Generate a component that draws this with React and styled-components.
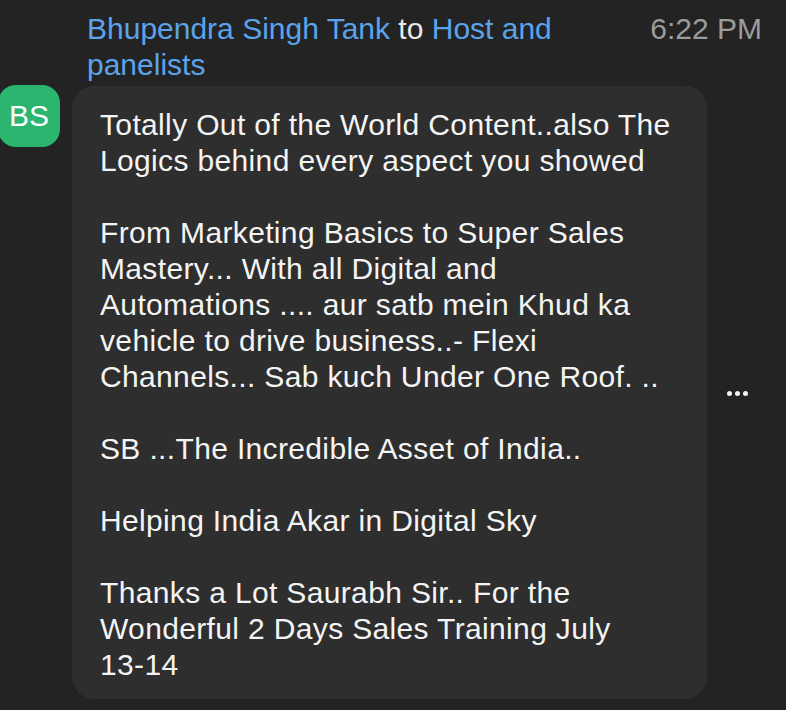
import styled, { createGlobalStyle } from "styled-components";

const Global = createGlobalStyle`
  html, body {
    margin: 0;
    padding: 0;
    background: #232323;
  }
  body {
    font-family: "Liberation Sans", Arial, sans-serif;
    -webkit-font-smoothing: antialiased;
  }
`;

const Page = styled.div`
  width: 786px;
  height: 710px;
  overflow: hidden;
  background: #232323;
`;

const Message = styled.div`
  display: grid;
  grid-template-columns: 72px 635px 1fr;
  grid-template-rows: auto auto;
  padding-top: 11px;
`;

const Header = styled.div`
  grid-column: 2 / 4;
  display: flex;
  justify-content: space-between;
  align-items: flex-start;
  padding-left: 15px;
  padding-right: 24px;
`;

const Meta = styled.div`
  width: 500px;
  font-size: 30px;
  line-height: 36px;
  color: #e8e8e8;
`;

const Name = styled.span`
  color: #5ba3ea;
`;

const Time = styled.div`
  font-size: 30px;
  line-height: 36px;
  color: #9c9c9c;
`;

const Avatar = styled.div`
  grid-column: 1;
  width: 62px;
  height: 62px;
  margin-left: -2px;
  margin-top: 2px;
  border-radius: 18px;
  background: #2bb56e;
  color: #fff;
  font-size: 30px;
  display: flex;
  align-items: center;
  justify-content: center;
`;

const Bubble = styled.div`
  grid-column: 2;
  margin-top: 3px;
  background: #2e2e2e;
  border-radius: 22px;
  padding: 21px 35px 16px 28px;
  font-size: 30px;
  line-height: 36px;
  letter-spacing: 0.35px;
  color: #f4f4f4;
`;

const Para = styled.p`
  margin: 0 0 36px;
  &:last-child {
    margin-bottom: 0;
  }
`;

const NoWrap = styled.span`
  white-space: nowrap;
`;

const Side = styled.div`
  grid-column: 3;
  display: flex;
  align-items: center;
  padding-left: 20px;
`;

const Dots = styled.div`
  display: flex;
  gap: 3px;
  margin-top: 4px;
`;

const Dot = styled.span`
  width: 5px;
  height: 5px;
  border-radius: 50%;
  background: #f2f2f2;
`;

const paragraphs = [
  "Totally Out of the World Content..also The Logics behind every aspect you showed",
  "From Marketing Basics to Super Sales Mastery... With all Digital and Automations .... aur satb mein Khud ka vehicle to drive business..- Flexi Channels... Sab kuch Under One Roof. ..",
  "SB ...The Incredible Asset of India..",
  "Helping India Akar in Digital Sky",
  <>
    Thanks a Lot Saurabh Sir.. For the Wonderful 2 Days Sales Training July{" "}
    <NoWrap>13-14</NoWrap>
  </>,
];

export default function App() {
  return (
    <Page>
      <Global />
      <Message>
        <Header>
          <Meta>
            <Name>Bhupendra Singh Tank</Name> to <Name>Host and panelists</Name>
          </Meta>
          <Time>6:22 PM</Time>
        </Header>
        <Avatar>BS</Avatar>
        <Bubble>
          {paragraphs.map((p, i) => (
            <Para key={i}>{p}</Para>
          ))}
        </Bubble>
        <Side>
          <Dots>
            <Dot />
            <Dot />
            <Dot />
          </Dots>
        </Side>
      </Message>
    </Page>
  );
}
